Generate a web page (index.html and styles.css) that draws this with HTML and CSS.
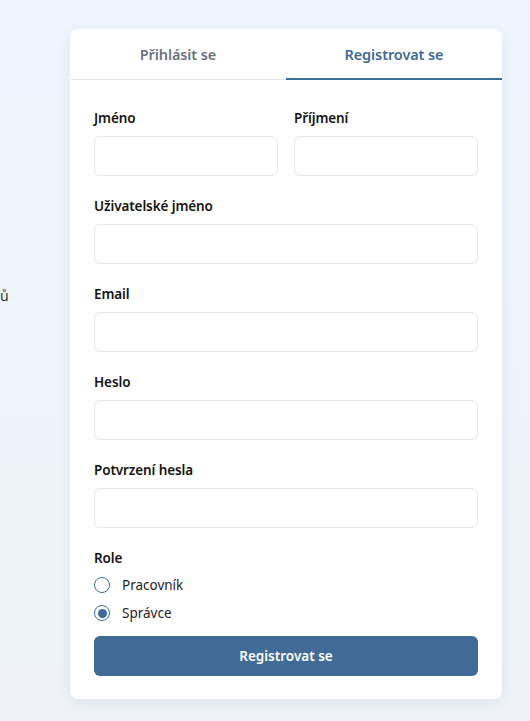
FILE: index.html
```html
<!DOCTYPE html>
<html lang="cs">
<head>
<meta charset="utf-8">
<title>Registrace</title>
<link rel="stylesheet" href="styles.css">
</head>
<body>
<div class="page">
  <aside class="side"><span class="side-text">ů</span></aside>
  <main class="card">
    <nav class="tabs">
      <button class="tab">Přihlásit se</button>
      <button class="tab active">Registrovat se</button>
    </nav>
    <form class="form">
      <div class="row">
        <div class="field">
          <label class="label">Jméno</label>
          <input class="input" type="text">
        </div>
        <div class="field">
          <label class="label">Příjmení</label>
          <input class="input" type="text">
        </div>
      </div>
      <div class="field">
        <label class="label">Uživatelské jméno</label>
        <input class="input" type="text">
      </div>
      <div class="field">
        <label class="label">Email</label>
        <input class="input" type="email">
      </div>
      <div class="field">
        <label class="label">Heslo</label>
        <input class="input" type="password">
      </div>
      <div class="field">
        <label class="label">Potvrzení hesla</label>
        <input class="input" type="password">
      </div>
      <div class="field role">
        <span class="label">Role</span>
        <label class="radio"><span class="dot"></span>Pracovník</label>
        <label class="radio"><span class="dot checked"></span>Správce</label>
      </div>
      <button type="button" class="submit">Registrovat se</button>
    </form>
  </main>
</div>
</body>
</html>
```
FILE: styles.css
```css
* { box-sizing: border-box; }
html, body { margin: 0; height: 100%; }
body {
  background: linear-gradient(180deg, #eef5fe 0%, #eff3f9 100%);
  font-family: "Noto Sans", "Open Sans", sans-serif;
  color: #1a1a1a;
}
.page {
  display: flex;
  align-items: flex-start;
  padding-top: 29px;
}
.side {
  width: 70px;
  flex: none;
  padding-top: 255px;
}
.side-text {
  font-size: 14px;
  color: #333;
  line-height: 20px;
}
.card {
  width: 432px;
  background: #fff;
  border-radius: 8px;
  box-shadow: 0 4px 14px rgba(30, 50, 90, 0.08);
  overflow: hidden;
}
.tabs {
  display: flex;
  border-bottom: 1px solid #e3e5e8;
  height: 51px;
}
.tab {
  flex: 1;
  background: none;
  border: none;
  font-family: inherit;
  font-size: 14.5px;
  font-weight: 600;
  color: #6b7280;
  padding: 0;
  margin-bottom: -1px;
  border-bottom: 2px solid transparent;
  letter-spacing: -0.1px;
}
.tab.active {
  color: #3f6b96;
  border-bottom-color: #3f6b96;
}
.form {
  display: flex;
  flex-direction: column;
  gap: 20px;
  padding: 28px 24px 23px;
}
.row {
  display: flex;
  gap: 16px;
}
.row .field { flex: 1; }
.field {
  display: flex;
  flex-direction: column;
  gap: 8px;
}
.label {
  font-size: 13.5px;
  font-weight: 600;
  line-height: 20px;
  color: #141414;
  letter-spacing: -0.1px;
}
.input {
  height: 40px;
  border: 1px solid #e2e7ef;
  border-radius: 6px;
  background: #fff;
  width: 100%;
}
.role { gap: 0; }
.role .label { margin-bottom: 3px; }
.radio {
  display: flex;
  align-items: center;
  gap: 12px;
  font-size: 13.5px;
  line-height: 28px;
  height: 28px;
  color: #1f2328;
}
.dot {
  width: 16px;
  height: 16px;
  border: 1.5px solid #3f6b96;
  border-radius: 50%;
  flex: none;
  display: flex;
  align-items: center;
  justify-content: center;
}
.dot.checked::after {
  content: "";
  width: 9px;
  height: 9px;
  border-radius: 50%;
  background: #3f6b96;
}
.submit {
  margin-top: -11px;
  height: 40px;
  border: none;
  border-radius: 6px;
  background: #3f6b96;
  color: #fff;
  font-family: inherit;
  font-size: 13.5px;
  font-weight: 600;
}
```
